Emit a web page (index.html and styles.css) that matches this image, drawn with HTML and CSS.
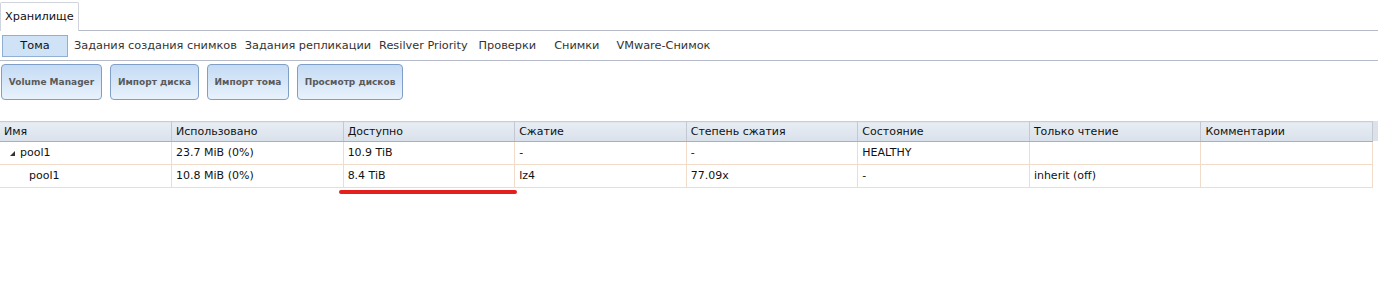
FILE: index.html
```html
<!DOCTYPE html>
<html lang="ru">
<head>
<meta charset="UTF-8">
<title>Хранилище</title>
<link rel="stylesheet" href="styles.css">
</head>
<body>
<div class="tabbar">
    <div class="tab selected">Хранилище</div>
</div>
<div class="subtabs">
    <div class="subtab selected">Тома</div>
    <div class="subtab">Задания создания снимков</div>
    <div class="subtab">Задания репликации</div>
    <div class="subtab">Resilver Priority</div>
    <div class="subtab checks">Проверки</div>
    <div class="subtab snaps">Снимки</div>
    <div class="subtab">VMware-Снимок</div>
</div>
<div class="toolbar">
    <button class="btn vm">Volume Manager</button>
    <button class="btn disk">Импорт диска</button>
    <button class="btn vol">Импорт тома</button>
    <button class="btn view">Просмотр дисков</button>
</div>
<div class="grid">
    <table>
        <thead>
            <tr>
                <th>Имя</th>
                <th>Использовано</th>
                <th>Доступно</th>
                <th>Сжатие</th>
                <th>Степень сжатия</th>
                <th>Состояние</th>
                <th>Только чтение</th>
                <th>Комментарии</th>
            </tr>
        </thead>
        <tbody>
            <tr>
                <td><span class="expander"></span>pool1</td>
                <td>23.7 MiB (0%)</td>
                <td>10.9 TiB</td>
                <td>-</td>
                <td>-</td>
                <td>HEALTHY</td>
                <td></td>
                <td></td>
            </tr>
            <tr>
                <td class="child">pool1</td>
                <td>10.8 MiB (0%)</td>
                <td>8.4 TiB</td>
                <td>lz4</td>
                <td>77.09x</td>
                <td>-</td>
                <td>inherit (off)</td>
                <td></td>
            </tr>
        </tbody>
    </table>
    <div class="scrollbar"></div>
</div>
<div class="mark"></div>
</body>
</html>
```

FILE: styles.css
```css
body {
  margin: 0;
  background: #fff;
  color: #111;
  font-family: "DejaVu Sans", Verdana, sans-serif;
  font-size: 11px;
}

.tabbar {
  display: flex;
  padding-top: 2px;
  border-bottom: 1px solid #b5bac8;
  height: 28px;
}

.tab {
  width: 73px;
  padding: 7px 0 0 4px;
  border: 1px solid #d0d4dc;
  border-bottom: none;
  border-radius: 2px 2px 0 0;
  background: #fff;
  margin-bottom: -1px;
  font-size: 11.3px;
}

.subtabs {
  display: flex;
  align-items: center;
  height: 29px;
  border-bottom: 1px solid #b5bac8;
  padding-left: 2px;
  font-size: 11.3px;
}

.subtab {
  padding: 0 4px;
  color: #333;
  white-space: nowrap;
}

.subtab.selected {
  width: 64px;
  height: 20px;
  padding: 0;
  margin-right: 2px;
  line-height: 20px;
  text-align: center;
  background: #cfe2f6;
  border: 1px solid #8fb0d2;
  color: #111;
}

.subtab.checks {
  margin-left: 3px;
}

.subtab.snaps {
  margin-left: 10px;
  margin-right: 9px;
}

.toolbar {
  display: flex;
  gap: 8px;
  padding: 3px 0 0 1px;
  height: 57px;
}

.btn {
  height: 36px;
  padding: 0;
  border: 1px solid #7f9fc6;
  border-radius: 4px;
  background: linear-gradient(#c4dbf4, #e9f2fc);
  font-family: "DejaVu Sans", Verdana, sans-serif;
  font-size: 9px;
  font-weight: bold;
  color: #5a5a5a;
}

.btn.vm { width: 101px; }
.btn.disk { width: 89px; }
.btn.vol { width: 82px; }
.btn.view { width: 106px; }

.grid {
  display: flex;
}

table {
  width: 1373px;
  border-collapse: collapse;
  table-layout: fixed;
}

th {
  height: 18px;
  padding: 0 4px 1px;
  text-align: left;
  font-weight: normal;
  background: linear-gradient(#e8edf4, #d9e1eb);
  border-top: 1px solid #c8ccd4;
  border-bottom: 1px solid #a9b0bc;
  border-right: 1px solid #c3c9d3;
}

td {
  height: 20px;
  padding: 0 4px 2px;
  border: 1px solid #f0dcc8;
  border-top: none;
  white-space: nowrap;
}

td:first-child {
  border-left: none;
}

td.child {
  padding-left: 29px;
}

.expander {
  display: inline-block;
  width: 0;
  height: 0;
  margin: 0 5px 0 6px;
  border-left: 5px solid transparent;
  border-bottom: 5px solid #333;
}

.scrollbar {
  width: 5px;
  height: 20px;
  background: #dde2ea;
}

.mark {
  width: 178px;
  height: 4px;
  margin: 2px 0 0 339px;
  border-radius: 2px;
  background: #e3201e;
}
```
